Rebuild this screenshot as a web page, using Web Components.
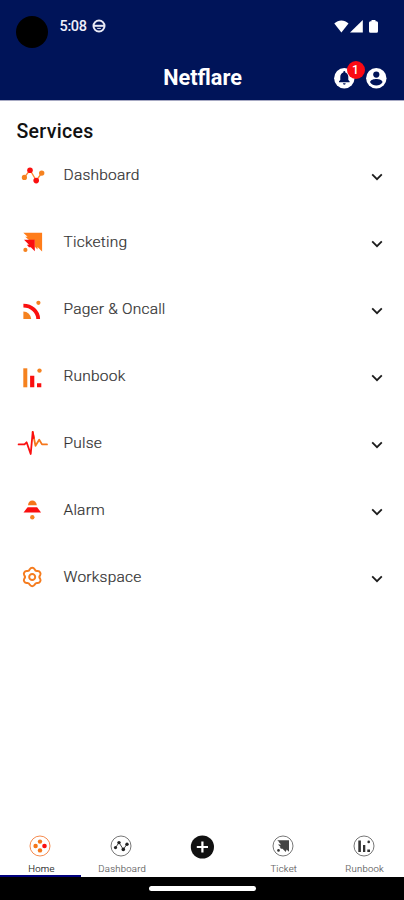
<!DOCTYPE html>
<html lang="en">
<head>
<meta charset="utf-8">
<title>Netflare</title>
<style>
html,body{margin:0;background:#fff}
body{font-family:Roboto,"Liberation Sans",sans-serif}
</style>
</head>
<body>
<netflare-app></netflare-app>
<script>
const ICONS = {
  dashboard: `<path d="M8.4 18.4 14 11l6.3 10.5L25.7 14" fill="none" stroke="#f83" stroke-width="1.3"/><g fill="#f5821f"><circle cx="8.4" cy="18.4" r="2.6"/><circle cx="25.7" cy="14.1" r="2.7"/></g><g fill="#fa0f0f"><circle cx="14" cy="11.2" r="2.8"/><circle cx="20.2" cy="21.6" r="2.8"/></g>`,
  ticketing: `<path d="M7.3 6.700H26.1V25.600L21.500 21 21.500 23.500 18.800 20.800V14H13L9.200 10.800H11.600Z" fill="#ff7d1a"/><path d="M8 13.800H18.800V25.200L14.800 21.200H13L10.800 18.800H13Z" fill="#fa0f0f"/><circle cx="9.4" cy="23.9" r="2.1" fill="#f5821f"/>`,
  pager: `<path d="M7.4 26V18.5A7.9 7.9 0 0 1 15.2 26Z" fill="#f5821f"/><path d="M7.4 12.7C15.5 12.7 22 18.5 22.2 26" fill="none" stroke="#fa0f0f" stroke-width="3.8"/><circle cx="22.4" cy="9.8" r="2.1" fill="#f5821f"/>`,
  runbook: `<path d="M7.3 8.3h4v19h-4z" fill="#f5821f"/><path d="M14.1 15.7h4.2v11.6h-4.2zM21 23.2h4.3v4.1H21z" fill="#fa0f0f"/><circle cx="23.5" cy="10.6" r="2.2" fill="#f5821f"/>`,
  pulse: `<g fill="none" stroke-width="1.8" stroke-linejoin="round" stroke-linecap="round"><path d="M16.7 5 19.5 18.8 23.2 12.7 26 17.4H31" stroke="#f5761a"/><path d="M2.6 17.4H8.5L10.6 15.3 14.7 27 16.7 5 17.8 11" stroke="#fa0f0f"/></g>`,
  alarm: `<path d="M12 11.2C12.2 8.3 14 6.6 16.3 6.6S20.5 8.3 20.8 11.2Z" fill="#f5761a"/><path d="M11.6 13.2H21.1L25.1 18.5H7.5Z" fill="#fa0f0f"/><circle cx="16.3" cy="23.3" r="2.2" fill="#f5821f"/>`,
  workspace: `<g transform="translate(16.2 16) scale(1.080)" fill="none" stroke="#f57c1f" stroke-width="1.8"><path d="M-2.22-7.27A2.6 2.6 0 0 1 2.22-7.27A2.500 2.500 0 0 0 5.18-5.56A2.6 2.6 0 0 1 7.41-1.71A2.500 2.500 0 0 0 7.41 1.71A2.6 2.6 0 0 1 5.18 5.56A2.500 2.500 0 0 0 2.22 7.27A2.6 2.6 0 0 1-2.22 7.27A2.500 2.500 0 0 0-5.18 5.56A2.6 2.6 0 0 1-7.41 1.71A2.500 2.500 0 0 0-7.41-1.71A2.6 2.6 0 0 1-5.18-5.56A2.500 2.500 0 0 0-2.22-7.27Z"/><circle r="2.800"/></g>`,
  navhome: `<circle cx="12" cy="12" r="10" fill="none" stroke="#f68b4e" stroke-width="1"/><g fill="#f5761a"><circle cx="12" cy="7.6" r="2.2"/><circle cx="7.6" cy="12" r="2.2"/><circle cx="12" cy="16.4" r="2.2"/></g><circle cx="16.5" cy="12" r="2.3" fill="#fa0f0f"/>`,
  navdashboard: `<circle cx="12" cy="12" r="10" fill="none" stroke="#777" stroke-width="1"/><path d="M6.5 13.6 10 8.6l4.3 6.8L18 10.2" stroke="#444" fill="none"/><g fill="#222"><circle cx="6.5" cy="13.6" r="1.6"/><circle cx="10" cy="8.6" r="1.7"/><circle cx="14.3" cy="15.4" r="1.8"/><circle cx="18" cy="10.2" r="1.7"/></g>`,
  navticket: `<circle cx="12" cy="12" r="10" fill="none" stroke="#777" stroke-width="1"/><path d="M6.300 6.300H18V17.700L15.600 15.400 14.800 18 11.500 14.800H10L8.600 13.200H9.800L7 10.600H10.200L7.800 8.200H8.400Z" fill="#444"/><circle cx="7.5" cy="16.4" r="1.3" fill="#333"/>`,
  navrunbook: `<circle cx="12" cy="12" r="10" fill="none" stroke="#777" stroke-width="1"/><path d="M6.3 6.5h2.6v11.6H6.3zM11 11h2.3v7.1H11zM15.3 15.5H18v2.6h-2.7z" fill="#333"/><circle cx="16.7" cy="7.9" r="1.3" fill="#333"/>`,
  navadd: `<circle cx="13.400" cy="13" r="11.6" fill="#111"/><path d="M13.400 7.400v11.2M7.800 13h11.2" stroke="#fff" stroke-width="2.2"/>`,
  chevron: `<path d="M1.2 1.4 6 6.2 10.8 1.4" fill="none" stroke="#1c1c1c" stroke-width="1.8"/>`,
  zen: `<circle cx="7" cy="7" r="5.5" fill="none" stroke="#e9eaf5" stroke-width="2"/><path d="M2 6.8h10" stroke="#e9eaf5" stroke-width="2"/><path d="M5.2 9.4h3.6" stroke="#e9eaf5" stroke-width="1"/>`,
  wifi: `<path d="M.3 3.4C4.4-.6 10.400-.6 14.500 3.400L7.400 12.500Z" fill="#fff"/>`,
  signal: `<path d="M12.800 0V12.600H0Z" fill="#fff"/>`,
  battery: `<path d="M2.500 1.200V0h4v1.200h1A1.500 1.500 0 0 1 9 2.700v8.500a1.500 1.500 0 0 1-1.500 1.500h-6A1.500 1.500 0 0 1 0 11.200V2.700A1.500 1.500 0 0 1 1.500 1.200Z" fill="#fff"/>`,
  bell: `<circle cx="10.300" cy="10.300" r="10.200" fill="#fff"/><path d="M5 14.300V13.200L6.300 12V8.800C6.300 6.400 7.700 4.900 9.300 4.500V3.900a1 1 0 0 1 2 0v.6c1.600.4 3 1.900 3 4.300V12l1.300 1.200v1.100Z" fill="#001459"/><path d="M8.900 15.300h2.800a1.400 1.400 0 0 1-2.800 0Z" fill="#001459"/>`,
  user: `<circle cx="10.300" cy="10.300" r="10.200" fill="#fff"/><circle cx="10.300" cy="6.600" r="3.100" fill="#001459"/><path d="M4.100 14.200C4.300 11.900 8.200 11.100 10.300 11.100S16.300 11.900 16.500 14.200C15 16.400 12.800 17.500 10.300 17.500S5.600 16.400 4.100 14.200Z" fill="#001459"/>`
};
class BaseElement extends HTMLElement {
  connectedCallback() {
    if (this.shadowRoot) return;
    this.attachShadow({mode: "open"}).innerHTML = this.render();
  }
}
customElements.define("nf-icon", class extends BaseElement {
  render() {
    const w = this.getAttribute("w"), h = this.getAttribute("h") || w;
    return `<style>:host{display:block;flex:none}svg{display:block}</style>
      <svg width="${w}" height="${h}" viewBox="0 0 ${w} ${h}" aria-hidden="true">${ICONS[this.getAttribute("name")]}</svg>`;
  }
});
customElements.define("status-bar", class extends BaseElement {
  render() {
    return `<style>
      :host{display:flex;align-items:flex-start;height:54px;padding:0 26px 0 16px;box-sizing:border-box;color:#eeeffa}
      .cam{width:32px;height:32px;margin-top:15.500px;border-radius:50%;background:#000}
      .time{margin:17px 0 0 11.500px;font-size:14.500px;line-height:19px;width:27px;letter-spacing:-.35px;font-weight:500}
      .zen{margin:19px auto 0 5.500px}
      .sys{display:flex;margin-top:19.500px}
      .bat{margin-left:6px}.sig{margin-left:1px}
    </style><div class="cam"></div><div class="time">5:08</div><nf-icon class="zen" name="zen" w="14"></nf-icon>
    <div class="sys"><nf-icon name="wifi" w="15" h="13"></nf-icon><nf-icon class="sig" name="signal" w="13"></nf-icon><nf-icon class="bat" name="battery" w="9" h="13"></nf-icon></div>`;
  }
});
customElements.define("app-header", class extends BaseElement {
  render() {
    return `<style>
      :host{display:grid;grid-template-columns:1fr auto 1fr;align-items:center;height:47px;padding:0 17.500px 0 18.500px;color:#fff}
      h1{grid-column:2;margin:0;font-size:21.700px;font-weight:700;line-height:28px}
      .acts{display:flex;justify-content:flex-end;gap:11px;padding-top:1px}
      .bell{position:relative}
      .badge{position:absolute;left:13px;top:-6.500px;width:18px;height:18px;border-radius:50%;background:#fa0a14;font-size:12px;line-height:18px;text-align:center;font-weight:500}
    </style><h1><slot></slot></h1>
    <div class="acts"><div class="bell"><nf-icon name="bell" w="21"></nf-icon><span class="badge">1</span></div><nf-icon name="user" w="21"></nf-icon></div>`;
  }
});
customElements.define("service-row", class extends BaseElement {
  render() {
    return `<style>
      :host{display:flex;align-items:center;height:67px;padding:0 21px 0 16px}
      .t{flex:1;margin-left:15.500px;font-size:15.500px;letter-spacing:.22px;color:#333;line-height:20px;font-weight:300;-webkit-text-stroke:.2px #333}
      .c{margin-top:4px}
    </style><nf-icon name="${this.getAttribute("icon")}" w="32"></nf-icon><span class="t"><slot></slot></span><nf-icon class="c" name="chevron" w="12" h="8"></nf-icon>`;
  }
});
customElements.define("nav-item", class extends BaseElement {
  render() {
    const big = this.getAttribute("icon") === "navadd";
    return `<style>
      :host{display:flex;flex-direction:column;align-items:center;box-sizing:border-box;height:100%;padding-top:4px;border-bottom:1px solid #a9c3d6;color:#666}
      :host([plain]){border-color:#ddd}
      :host([active]){color:#222;border-bottom:3px solid #00007e}
      .l{margin-top:4px;padding-left:2px;font-size:9.500px;line-height:13px;letter-spacing:.25px;font-weight:300;-webkit-text-stroke:.15px;white-space:nowrap}
    </style><nf-icon name="${this.getAttribute("icon")}" w="${big ? 26 : 24}" h="${big ? 25 : 24}"></nf-icon><span class="l"><slot></slot></span>`;
  }
});
customElements.define("bottom-nav", class extends BaseElement {
  render() {
    return `<style>
      :host{display:grid;grid-template-columns:repeat(5,1fr);height:47px}
    </style><slot></slot>`;
  }
});
customElements.define("netflare-app", class extends BaseElement {
  render() {
    return `<style>
      :host{display:flex;flex-direction:column;width:404px;height:900px;background:#fff;overflow:hidden}
      .top{height:101px;background:#001459;border-bottom:1px solid #a7a9c3;box-sizing:border-box}
      main{flex:1}
      h2{margin:0;padding:18px 0 0 16.500px;font-size:19.500px;line-height:26px;font-weight:500;letter-spacing:.3px;color:#111}
      .list{margin-top:-3.500px}
      .gesture{height:23px;background:#000;display:flex;justify-content:center;padding-top:9px;box-sizing:border-box}
      .pill{width:107px;height:5px;border-radius:3px;background:#fff}
    </style>
    <div class="top"><status-bar></status-bar><app-header>Netflare</app-header></div>
    <main><h2>Services</h2><div class="list">
      <service-row icon="dashboard">Dashboard</service-row>
      <service-row icon="ticketing">Ticketing</service-row>
      <service-row icon="pager">Pager &amp; Oncall</service-row>
      <service-row icon="runbook">Runbook</service-row>
      <service-row icon="pulse">Pulse</service-row>
      <service-row icon="alarm">Alarm</service-row>
      <service-row icon="workspace">Workspace</service-row>
    </div></main>
    <bottom-nav>
      <nav-item icon="navhome" active>Home</nav-item>
      <nav-item icon="navdashboard">Dashboard</nav-item>
      <nav-item icon="navadd" plain></nav-item>
      <nav-item icon="navticket">Ticket</nav-item>
      <nav-item icon="navrunbook">Runbook</nav-item>
    </bottom-nav>
    <div class="gesture"><div class="pill"></div></div>`;
  }
});
</script>
</body>
</html>
